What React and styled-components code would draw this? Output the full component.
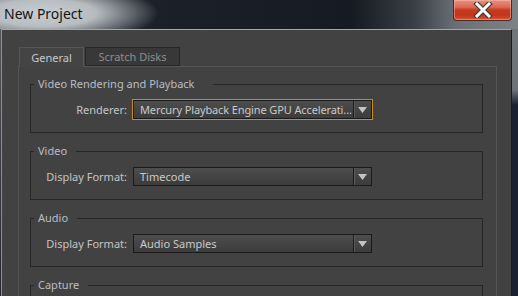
import React from 'react';
import styled, { createGlobalStyle } from 'styled-components';

const Global = createGlobalStyle`
  html, body { margin: 0; padding: 0; width: 518px; height: 296px; overflow: hidden; }
  body { font-family: "Noto Sans", "Open Sans", sans-serif; font-size: 11px; background: #1b2130; }
  * { box-sizing: border-box; }
`;

const Frame = styled.div`
  width: 518px;
  height: 296px;
  display: flex;
  flex-direction: column;
  background:
    linear-gradient(to bottom, #72787c 0px, #6c7276 90px, #1b2130 105px, #1b2130 100%) right top / 7px 100% no-repeat,
    linear-gradient(to bottom, #5a5e62 0px, #3a3e44 150px, #23272d 100%) left top / 1px 100% no-repeat,
    #1b2130;
  overflow: hidden;
`;

const TitleBar = styled.div`
  height: 29px;
  flex: none;
  display: flex;
  align-items: flex-start;
  justify-content: space-between;
  background:
    radial-gradient(ellipse 115px 30px at 44px 13px, rgba(200,205,209,1) 0%, rgba(190,195,199,0.95) 45%, rgba(28,33,42,0) 100%),
    linear-gradient(to right, #4c5156 0%, #1c2029 30%, #161a22 68%, #3a3f45 80%, #6a7075 88%, #7c8286 100%);
`;

const Title = styled.div`
  font-family: "Noto Sans", sans-serif;
  font-size: 14px;
  color: #141414;
  padding: 4px 0 0 4px;
  line-height: 20px;
`;

const CloseButton = styled.div`
  width: 59px;
  height: 21px;
  margin-right: 6px;
  border: 1px solid #4a2a24;
  border-top: none;
  border-radius: 0 0 4px 4px;
  display: flex;
  align-items: center;
  justify-content: center;
  background: linear-gradient(to bottom, #e8907e 0%, #dc6a56 35%, #c63a1e 50%, #c2361c 75%, #d65234 100%);
  box-shadow: inset 0 0 0 1px rgba(255,200,190,0.45);
`;

const Client = styled.div`
  flex: 1;
  width: 511px;
  margin-left: 1px;
  border-top: 1px solid #a2a8ac;
  border-left: 1px solid #8a9094;
  border-right: 1px solid #1e1e1e;
  background: #424242;
  padding: 17px 14px 0 16px;
  display: flex;
  flex-direction: column;
  overflow: hidden;
`;

const TabStrip = styled.div`
  display: flex;
  gap: 1px;
  padding-left: 1px;
  height: 20px;
  position: relative;
  z-index: 1;
`;

const Tab = styled.div`
  height: ${p => (p.$active ? '20px' : '19px')};
  width: ${p => p.$w}px;
  display: flex;
  align-items: center;
  justify-content: center;
  color: ${p => (p.$active ? '#c6c9cc' : '#8e8e8e')};
  background: ${p => (p.$active ? '#444444' : '#383838')};
  border: 1px solid ${p => (p.$active ? '#565656' : '#262626')};
  border-bottom: ${p => (p.$active ? 'none' : '1px solid #262626')};
  font-size: 11px;
  line-height: 1;
  padding-bottom: 1px;
`;

const Panel = styled.div`
  flex: 1;
  margin-top: -1px;
  border: 1px solid #555555;
  border-bottom: none;
  padding: 9px 13px 0 11px;
  display: flex;
  flex-direction: column;
  gap: 10px;
`;

const Group = styled.fieldset`
  margin: 0;
  padding: 0 0 13px 0;
  border: 1px solid #262626;
  min-inline-size: 0;
  min-height: 48px;
  flex: none;
`;

const Legend = styled.legend`
  margin-left: 3px;
  padding: 0 ${p => p.$gap}px 0 4px;
  color: #b8bec4;
  font-size: 11px;
  line-height: 16px;
`;

const Row = styled.div`
  display: flex;
  align-items: center;
  margin-top: 8px;
  gap: 6px;
`;

const Label = styled.div`
  width: 96px;
  text-align: right;
  color: #c2c4c6;
  font-size: 11px;
  white-space: nowrap;
`;

const Select = styled.div`
  width: 239px;
  height: 19px;
  display: flex;
  align-items: center;
  border: 1px solid #1a1a1a;
  background: linear-gradient(to bottom, #4e4e4e 0%, #444444 50%, #3c3c3c 100%);
  box-shadow: ${p => (p.$focus ? '0 0 0 1px #c8900c' : 'none')};
  color: #cacaca;
  font-size: 11px;
`;

const SelectText = styled.div`
  flex: 1;
  min-width: 0;
  padding-left: 6px;
  white-space: nowrap;
  overflow: hidden;
  line-height: 17px;
  letter-spacing: ${p => (p.$tight ? '-0.12px' : '0')};
`;

const ArrowBox = styled.div`
  width: 18px;
  height: 17px;
  border-left: 1px solid #1c1c1c;
  box-shadow: inset 1px 0 0 #5a5a5a;
  display: flex;
  align-items: center;
  justify-content: center;
  flex: none;
`;

const Arrow = () => (
  <svg width="9" height="6" viewBox="0 0 9 6">
    <path d="M0 0 H9 L4.5 6 Z" fill="#c4c4c4" />
  </svg>
);

const CloseX = () => (
  <svg width="20" height="16" viewBox="0 0 20 16">
    <path d="M4 2 L16 14 M16 2 L4 14" stroke="#3a3a3a" strokeWidth="5.2" strokeLinecap="square" />
    <path d="M4 2 L16 14 M16 2 L4 14" stroke="#ffffff" strokeWidth="3" strokeLinecap="square" />
  </svg>
);

const groups = [
  { title: 'Video Rendering and Playback', gap: 18, label: 'Renderer:', value: 'Mercury Playback Engine GPU Accelerati...', focus: true },
  { title: 'Video', gap: 9, label: 'Display Format:', value: 'Timecode' },
  { title: 'Audio', gap: 9, label: 'Display Format:', value: 'Audio Samples' },
  { title: 'Capture', gap: 9 },
];

export default function App() {
  return (
    <>
      <Global />
      <Frame>
        <TitleBar>
          <Title>New Project</Title>
          <CloseButton><CloseX /></CloseButton>
        </TitleBar>
        <Client>
          <TabStrip>
            <Tab $active $w={65}>General</Tab>
            <Tab $w={95}>Scratch Disks</Tab>
          </TabStrip>
          <Panel>
            {groups.map(g => (
              <Group key={g.title}>
                <Legend $gap={g.gap}>{g.title}</Legend>
                {g.label && (
                  <Row>
                    <Label>{g.label}</Label>
                    <Select $focus={g.focus}>
                      <SelectText $tight={g.focus}>{g.value}</SelectText>
                      <ArrowBox><Arrow /></ArrowBox>
                    </Select>
                  </Row>
                )}
              </Group>
            ))}
          </Panel>
        </Client>
      </Frame>
    </>
  );
}
